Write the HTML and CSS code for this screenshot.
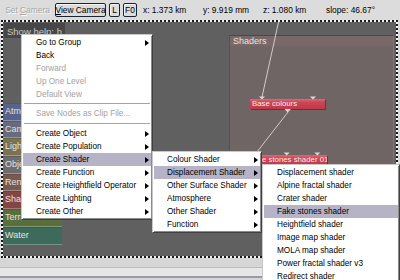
FILE: index.html
```html
<!DOCTYPE html>
<html>
<head>
<meta charset="utf-8">
<link rel="stylesheet" href="styles.css">
</head>
<body>
<div class="app">
  <div class="toolbar">
    <span class="tb-btn tb-set"><span>Set <u>C</u>amera</span></span>
    <span class="tb-btn tb-framed tb-view"><span><u>V</u>iew Camera</span></span>
    <span class="tb-btn tb-framed tb-l">L</span>
    <span class="tb-btn tb-framed tb-f0">F0</span>
    <span class="coord cx">x: 1.373 km</span>
    <span class="coord cy">y: 9.919 mm</span>
    <span class="coord cz">z: 1.080 km</span>
    <span class="coord cs">slope: 46.67°</span>
  </div>
  <div class="frame">
    <div class="canvas">
      <div class="help">Show help: h</div>
      <div class="palette">
        <div class="pal atm">Atmosphere</div>
        <div class="pal cam">Cameras</div>
        <div class="pal lig">Lighting</div>
        <div class="pal obj">Objects</div>
        <div class="pal ren">Renderers</div>
        <div class="pal sha">Shaders</div>
        <div class="pal ter">Terrain</div>
        <div class="pal wat">Water</div>
      </div>
      <div class="group"><div class="group-head">Shaders</div></div>
      <div class="node node-base">Base colours</div>
      <div class="node node-fake">Fake stones shader 01</div>
      <svg class="wires" width="400" height="280" viewBox="0 0 400 280">
        <line x1="279" y1="20" x2="262" y2="97" stroke="#d2caca" stroke-width="1"/>
        <line x1="288" y1="112" x2="250" y2="161" stroke="#d2caca" stroke-width="1"/>
        <polygon points="259,96.5 265,96.5 262,99.5" fill="#e8d2d2"/>
        <polygon points="310,96.5 316,96.5 313,99.5" fill="#e8d2d2"/>
        <polygon points="284.5,109 291,109 287.7,112.5" fill="#e8d2d2"/>
        <polygon points="283.7,152.5 289.7,152.5 286.7,155.5" fill="#e8d2d2"/>
        <polygon points="314.3,152.5 320.3,152.5 317.3,155.5" fill="#e8d2d2"/>
      </svg>
    </div>
  </div>
  <div class="status">
    <div class="sb1"></div>
    <div class="sb2"></div>
  </div>

  <div class="menu menu-main">
    <div class="mi"><span>Go to Group</span><span class="arrow"></span></div>
    <div class="mi"><span>Back</span></div>
    <div class="mi dis"><span>Forward</span></div>
    <div class="mi dis"><span>Up One Level</span></div>
    <div class="mi dis"><span>Default View</span></div>
    <div class="sep"></div>
    <div class="mi dis"><span>Save Nodes as Clip File...</span></div>
    <div class="sep sep2"></div>
    <div class="mi"><span>Create Object</span><span class="arrow"></span></div>
    <div class="mi"><span>Create Population</span><span class="arrow"></span></div>
    <div class="mi hl"><span>Create Shader</span><span class="arrow"></span></div>
    <div class="mi"><span>Create Function</span><span class="arrow"></span></div>
    <div class="mi"><span>Create Heightfield Operator</span><span class="arrow"></span></div>
    <div class="mi"><span>Create Lighting</span><span class="arrow"></span></div>
    <div class="mi"><span>Create Other</span><span class="arrow"></span></div>
  </div>

  <div class="menu menu-sub1">
    <div class="mi"><span>Colour Shader</span><span class="arrow"></span></div>
    <div class="mi hl"><span>Displacement Shader</span><span class="arrow"></span></div>
    <div class="mi"><span>Other Surface Shader</span><span class="arrow"></span></div>
    <div class="mi"><span>Atmosphere</span><span class="arrow"></span></div>
    <div class="mi"><span>Other Shader</span><span class="arrow"></span></div>
    <div class="mi"><span>Function</span><span class="arrow"></span></div>
  </div>

  <div class="menu menu-sub2">
    <div class="mi"><span>Displacement shader</span></div>
    <div class="mi"><span>Alpine fractal shader</span></div>
    <div class="mi"><span>Crater shader</span></div>
    <div class="mi hl"><span>Fake stones shader</span></div>
    <div class="mi"><span>Heightfield shader</span></div>
    <div class="mi"><span>Image map shader</span></div>
    <div class="mi"><span>MOLA map shader</span></div>
    <div class="mi"><span>Power fractal shader v3</span></div>
    <div class="mi"><span>Redirect shader</span></div>
  </div>
</div>
</body>
</html>
```

FILE: styles.css
```css
* { box-sizing: border-box; }
html, body { margin: 0; padding: 0; }
body {
  width: 400px;
  height: 280px;
  overflow: hidden;
  background: #dadada;
  font-family: "Liberation Sans", Arial, sans-serif;
  font-size: 8.2px;
  color: #000;
}
.app {
  position: relative;
  width: 400px;
  height: 280px;
  display: flex;
  flex-direction: column;
  overflow: hidden;
}

/* toolbar */
.toolbar {
  height: 20px;
  flex: none;
  display: flex;
  align-items: center;
  padding-left: 3px;
  background: #dcdcdc;
  font-size: 8.4px;
  white-space: nowrap;
}
.tb-btn {
  height: 14px;
  display: flex;
  align-items: center;
  justify-content: center;
  margin-right: 3px;
}
.tb-set { width: 49px; color: #a6a6a6; text-shadow: 1px 1px 0 #fbfbfb; }
.tb-framed {
  border: 1px solid #1c2230;
  border-radius: 2px;
  box-shadow: inset 1px 1px 0 #f4f4f4;
}
.tb-view { width: 51px; }
.tb-l { width: 11px; }
.tb-f0 { width: 14px; }
.coord { display: block; }
.cx { margin-left: 3px; width: 60px; }
.cy { width: 60px; }
.cz { width: 63px; }

/* canvas frame */
.frame {
  flex: none;
  margin-left: 1px;
  width: 397px;
  height: 238px;
  border: 2px dotted #1a1a1a;
  background: #f2f2f2;
}
.canvas {
  position: relative;
  width: 100%;
  height: 100%;
  background: #606060;
  overflow: hidden;
  display: flex;
  flex-direction: column;
  align-items: flex-start;
}
.help {
  margin: 1px 0 0 1px;
  width: 61px;
  height: 15px;
  padding: 2px 0 0 3px;
  line-height: 13px;
  font-size: 9.5px;
  background: #474747;
  color: #c8c8c8;
  white-space: nowrap;
}
.palette {
  margin-top: 65px;
  width: 59px;
  display: flex;
  flex-direction: column;
}
.pal {
  height: 17.7px;
  line-height: 14px;
  padding-left: 2px;
  font-size: 9px;
  color: #e2e2e2;
  border-top: 1px solid rgba(0,0,0,0.12);
  border-bottom: 1px solid rgba(255,255,255,0.28);
  white-space: nowrap;
  overflow: hidden;
}
.atm { background: #58638a; }
.cam { background: #666b7e; }
.lig { background: #79744f; }
.obj { background: #6d6d70; }
.ren { background: #795a51; }
.sha { background: #844545; }
.ter { background: #566f3d; }
.wat { background: #3d6a5b; }

/* node graph (free canvas) */
.group {
  position: absolute;
  left: 226px;
  top: 13px;
  width: 165px;
  height: 180px;
  background: #6f6565;
  border-top: 1px solid #4c4848;
  border-left: 1px solid #575252;
  border-right: 1px solid #7c7878;
}
.group-head {
  height: 10px;
  line-height: 10px;
  padding-left: 3px;
  font-size: 9px;
  color: #ede2e2;
  background: #7a6868;
}
.node {
  position: absolute;
  height: 10px;
  line-height: 10px;
  padding-left: 2px;
  font-size: 7.8px;
  color: #fbeaea;
  white-space: nowrap;
  overflow: hidden;
  background: linear-gradient(to bottom, #e36676 0, #cf4656 30%, #bd3849 100%);
  box-shadow: 1px 1px 0 #4a4040;
}
.node-base { left: 247px; top: 77px; width: 75px; }
.node-fake { left: 244px; top: 133px; width: 80px; height: 11px; }
.wires {
  position: absolute;
  left: -3px;
  top: -22px;
}

/* status area */
.status {
  flex: 1;
  display: flex;
  flex-direction: column;
  background: #d6d6d6;
}
.sb1 { height: 10px; background: #d6d6d6; border-bottom: 1px solid #bdbdbd; }
.sb2 { height: 10px; background: #e6e6e6; border-bottom: 2px solid #9a98aa; }

/* menus */
.menu {
  position: absolute;
  background: #fff;
  border: 1px solid;
  border-color: #c8c8c8 #404040 #404040 #c8c8c8;
  box-shadow: inset 1px 1px 0 #fff, inset -1px -1px 0 #8a8a8a;
  padding: 1px;
  font-size: 8.2px;
}
.menu-main { left: 21px; top: 34px; width: 132px; }
.menu-sub1 { left: 152px; top: 151px; width: 110px; }
.menu-sub2 { left: 262px; top: 164px; width: 138px; }
.mi {
  height: 13px;
  line-height: 13px;
  display: flex;
  justify-content: space-between;
  align-items: center;
  padding: 0 2px 0 13px;
  white-space: nowrap;
}
.mi.dis { color: #a2a2a2; }
.mi.hl { background: #b6b3c6; }
.arrow {
  width: 0;
  height: 0;
  border-left: 4px solid #000;
  border-top: 3px solid transparent;
  border-bottom: 3px solid transparent;
}
.sep {
  height: 6px;
  display: flex;
  align-items: center;
  padding: 0 1px;
}
.sep2 { height: 7px; }
.sep::before {
  content: "";
  flex: 1;
  border-top: 1px solid #a4a4a4;
  border-bottom: 1px solid #fff;
}
```
